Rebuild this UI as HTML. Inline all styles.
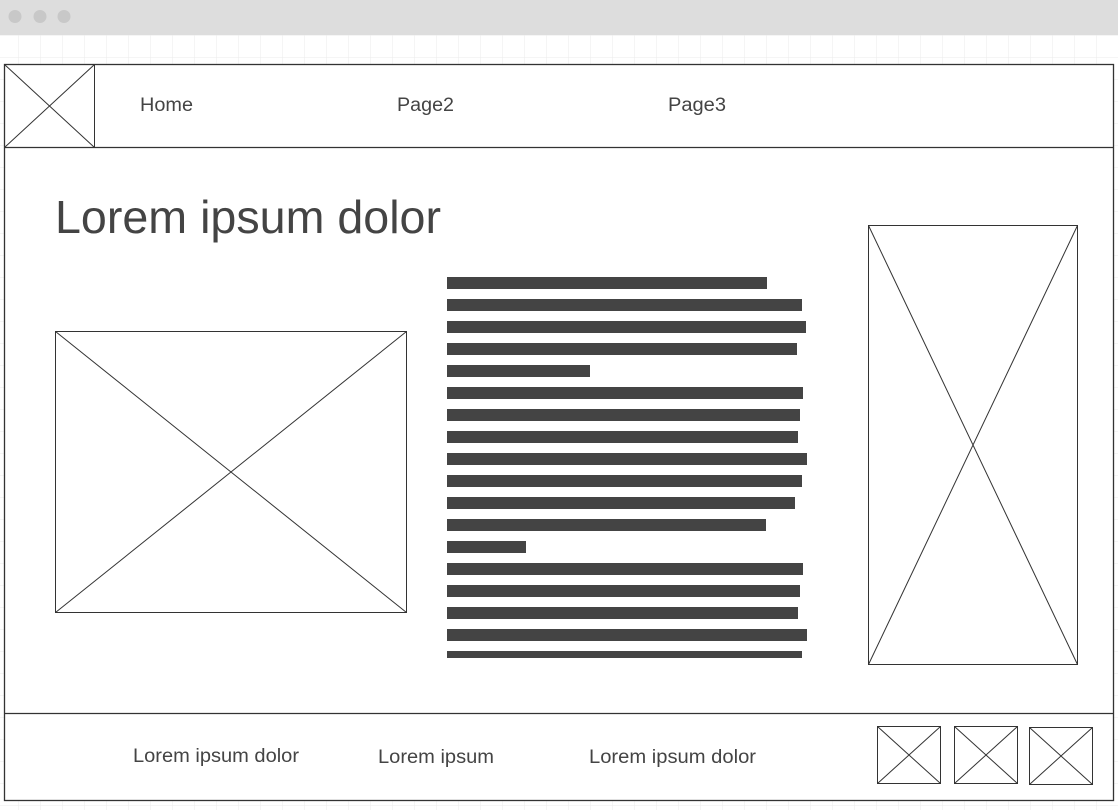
<!DOCTYPE html>
<html><head><meta charset="utf-8"><style>
html,body{margin:0;padding:0;width:1118px;height:810px;overflow:hidden;background:#fff}
svg{display:block}
text{font-family:"Liberation Sans",sans-serif;fill:#444}
</style></head><body>
<svg width="1118" height="810" xmlns="http://www.w3.org/2000/svg">
<defs>
<pattern id="g" x="18" y="57" width="22" height="22" patternUnits="userSpaceOnUse">
<path d="M0 0V22M0 0H22" stroke="#ebebeb" stroke-width="1" fill="none"/>
</pattern>
</defs>
<rect x="0" y="35" width="1118" height="775" fill="url(#g)"/>
<rect x="0" y="0" width="1118" height="35" fill="#dddddd"/>
<circle cx="15" cy="16.5" r="6.5" fill="#c8c8c8"/>
<circle cx="40" cy="16.5" r="6.5" fill="#c8c8c8"/>
<circle cx="64" cy="16.5" r="6.5" fill="#c8c8c8"/>
<g stroke="#333" fill="#fff" stroke-width="1.3">
<rect x="4.5" y="64.5" width="1109" height="736"/>
<line x1="4.5" y1="147.5" x2="1113.5" y2="147.5"/>
<line x1="4.5" y1="713.5" x2="1113.5" y2="713.5"/>
</g>
<g stroke="#333" fill="none" stroke-width="1">
<rect x="4.5" y="64.5" width="90" height="83"/><path d="M4.5 64.5L94.5 147.5M94.5 64.5L4.5 147.5"/>
<rect x="55.5" y="331.5" width="351" height="281"/><path d="M55.5 331.5L406.5 612.5M406.5 331.5L55.5 612.5"/>
<rect x="868.5" y="225.5" width="209" height="439"/><path d="M868.5 225.5L1077.5 664.5M1077.5 225.5L868.5 664.5"/>
<rect x="877.5" y="726.5" width="63" height="57"/><path d="M877.5 726.5L940.5 783.5M940.5 726.5L877.5 783.5"/>
<rect x="954.5" y="726.5" width="63" height="57"/><path d="M954.5 726.5L1017.5 783.5M1017.5 726.5L954.5 783.5"/>
<rect x="1029.5" y="727.5" width="63" height="57"/><path d="M1029.5 727.5L1092.5 784.5M1092.5 727.5L1029.5 784.5"/>
</g>
<text x="140" y="111" font-size="19" textLength="53" lengthAdjust="spacingAndGlyphs">Home</text>
<text x="397" y="111" font-size="19" textLength="57" lengthAdjust="spacingAndGlyphs">Page2</text>
<text x="668" y="111" font-size="19" textLength="58" lengthAdjust="spacingAndGlyphs">Page3</text>
<text x="55" y="233" font-size="46" textLength="386" lengthAdjust="spacingAndGlyphs">Lorem ipsum dolor</text>
<text x="133" y="762" font-size="19" textLength="166" lengthAdjust="spacingAndGlyphs">Lorem ipsum dolor</text>
<text x="378" y="763" font-size="19" textLength="116" lengthAdjust="spacingAndGlyphs">Lorem ipsum</text>
<text x="589" y="763" font-size="19" textLength="167" lengthAdjust="spacingAndGlyphs">Lorem ipsum dolor</text>
<g fill="#444">
<rect x="447" y="277" width="320" height="12"/>
<rect x="447" y="299" width="355" height="12"/>
<rect x="447" y="321" width="359" height="12"/>
<rect x="447" y="343" width="350" height="12"/>
<rect x="447" y="365" width="143" height="12"/>
<rect x="447" y="387" width="356" height="12"/>
<rect x="447" y="409" width="353" height="12"/>
<rect x="447" y="431" width="351" height="12"/>
<rect x="447" y="453" width="360" height="12"/>
<rect x="447" y="475" width="355" height="12"/>
<rect x="447" y="497" width="348" height="12"/>
<rect x="447" y="519" width="319" height="12"/>
<rect x="447" y="541" width="79" height="12"/>
<rect x="447" y="563" width="356" height="12"/>
<rect x="447" y="585" width="353" height="12"/>
<rect x="447" y="607" width="351" height="12"/>
<rect x="447" y="629" width="360" height="12"/>
<rect x="447" y="651" width="355" height="7"/>
</g>
</svg>
</body></html>
